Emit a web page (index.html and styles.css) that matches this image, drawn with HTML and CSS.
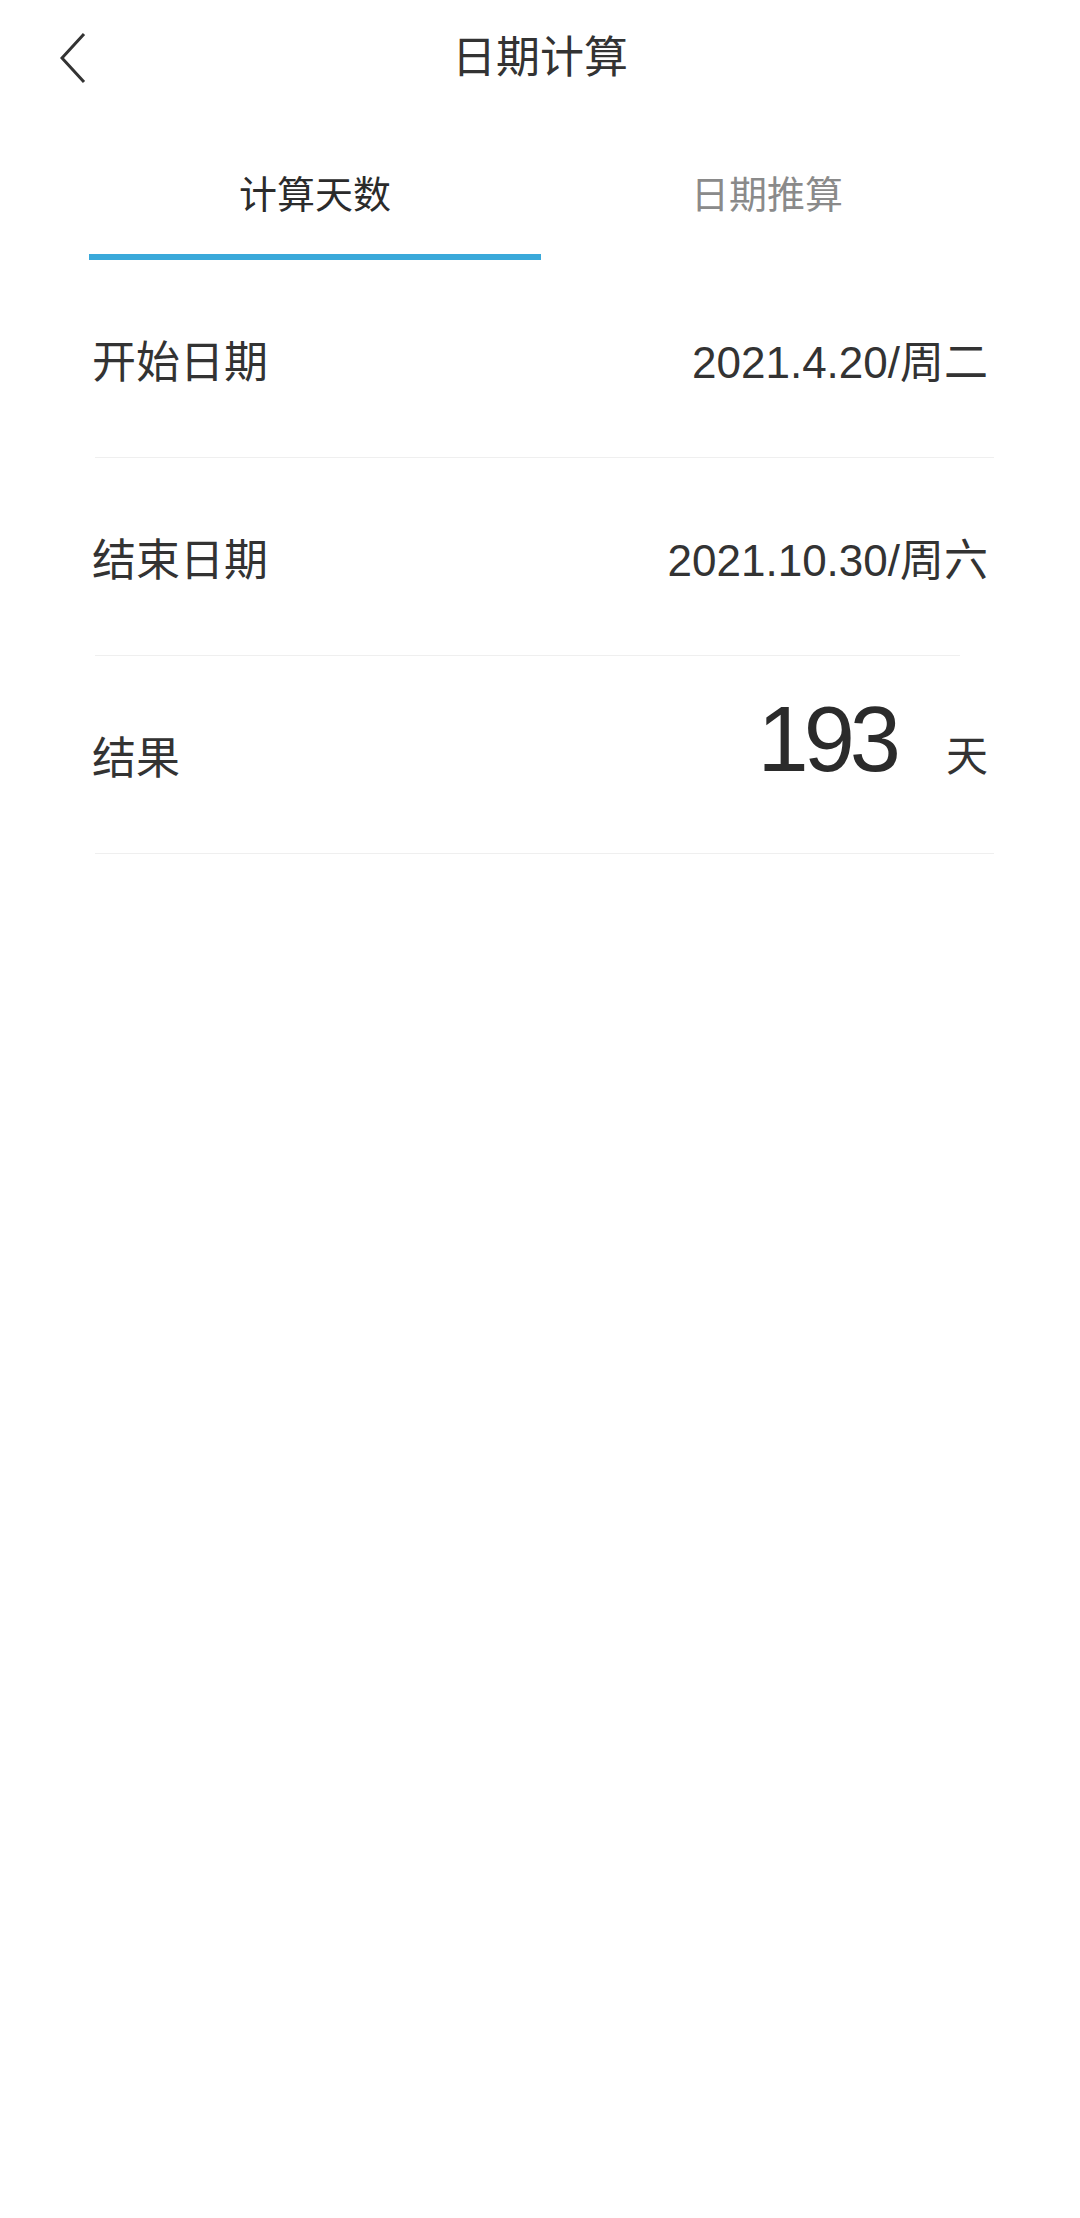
FILE: index.html
```html
<!DOCTYPE html>
<html>
<head>
<meta charset="utf-8">
<title>日期计算</title>
<link rel="stylesheet" href="styles.css">
</head>
<body>
  <div class="page">
    <div class="topbar">
      <div class="back">
        <svg width="30" height="56" viewBox="0 0 30 56"><polyline points="24,4 2,28 24,52" fill="none" stroke="#333" stroke-width="3"/></svg>
      </div>
      <h1 class="title">日期计算</h1>
    </div>

    <div class="tabs">
      <div class="tab active">计算天数</div>
      <div class="tab">日期推算</div>
    </div>

    <div class="rows">
      <div class="row">
        <span class="label">开始日期</span>
        <span class="value">2021.4.20/周二</span>
      </div>
      <div class="divider"></div>
      <div class="row">
        <span class="label">结束日期</span>
        <span class="value">2021.10.30/周六</span>
      </div>
      <div class="divider short"></div>
      <div class="row">
        <span class="label">结果</span>
        <span class="result"><span class="num">193</span><span class="unit">天</span></span>
      </div>
      <div class="divider"></div>
    </div>
  </div>
</body>
</html>
```

FILE: styles.css
```css
body {
  margin: 0;
  background: #fff;
  font-family: "Liberation Sans", "Noto Sans CJK SC", sans-serif;
  color: #333;
}

.page {
  width: 1080px;
  min-height: 2218px;
}

.topbar {
  height: 116px;
  display: flex;
  align-items: center;
  justify-content: center;
  position: relative;
}

.back {
  position: absolute;
  left: 60px;
  top: 30px;
}

.title {
  margin: 0;
  font-size: 44px;
  font-weight: normal;
  line-height: 50px;
  color: #333;
}

.tabs {
  display: flex;
  margin: 0 87px 0 89px;
}

.tab {
  flex: 1;
  text-align: center;
  font-size: 38px;
  line-height: 46px;
  padding: 56px 0 36px;
  border-bottom: 6px solid transparent;
  color: #8a8a8a;
}

.tab.active {
  color: #2b2b2b;
  border-bottom-color: #3aa9da;
}

.rows {
  padding: 0 86px 0 92px;
}

.row {
  height: 197px;
  display: flex;
  align-items: center;
  justify-content: space-between;
  padding-right: 6px;
  font-size: 44px;
}

.divider {
  height: 1px;
  background: #efefef;
  margin-left: 3px;
}

.divider.short {
  margin-right: 34px;
}

.result {
  display: flex;
  align-items: baseline;
  padding-bottom: 32px;
}

.num {
  font-size: 92px;
  line-height: 92px;
  letter-spacing: -5px;
  color: #2b2b2b;
}

.unit {
  font-size: 42px;
  margin-left: 50px;
}
```
